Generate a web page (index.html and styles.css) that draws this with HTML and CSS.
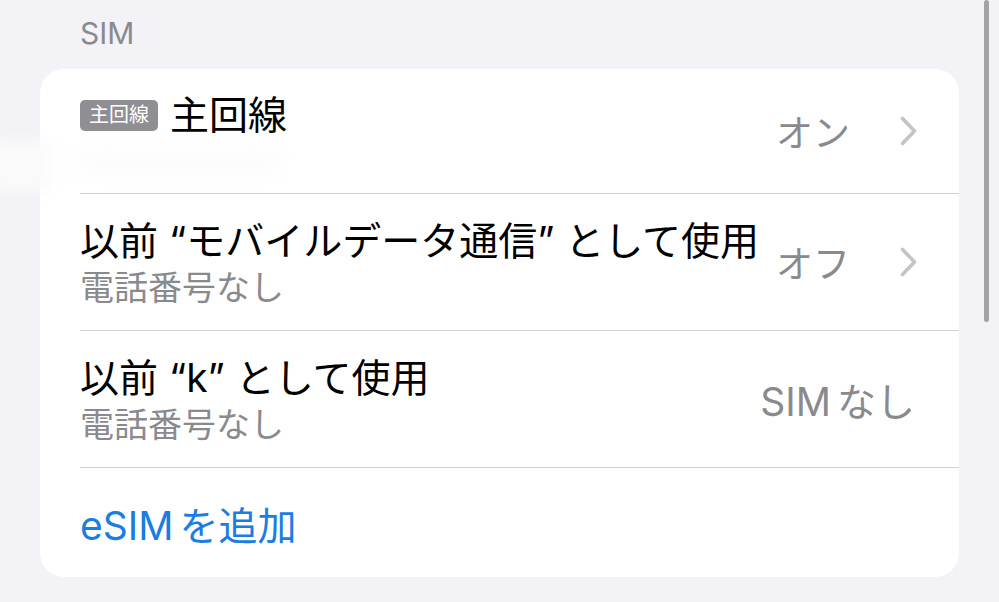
FILE: index.html
```html
<!DOCTYPE html>
<html lang="ja">
<head>
    <meta charset="UTF-8">
    <meta name="viewport" content="width=device-width, initial-scale=1.0">
    <title>SIM</title>
    <link rel="stylesheet" href="styles.css">
</head>
<body>
    <div class="page">
        <div class="section-title">SIM</div>
        <div class="card">
            <!-- 主回線 -->
            <div class="row row-main">
                <div class="row-text">
                    <div class="title"><span class="badge">主回線</span>主回線</div>
                    <div class="number-blur"></div>
                </div>
                <div class="value">オン</div>
                <svg class="chevron" width="17" height="30" viewBox="0 0 17 30"><polyline points="2.5,2.5 14.5,15 2.5,27.5" fill="none" stroke="#c4c4c7" stroke-width="3.6" stroke-linecap="round" stroke-linejoin="round"/></svg>
            </div>
            <div class="row">
                <div class="row-text">
                    <div class="title">以前 “モバイルデータ通信” として使用</div>
                    <div class="subtitle">電話番号なし</div>
                </div>
                <div class="value">オフ</div>
                <svg class="chevron" width="17" height="30" viewBox="0 0 17 30"><polyline points="2.5,2.5 14.5,15 2.5,27.5" fill="none" stroke="#c4c4c7" stroke-width="3.6" stroke-linecap="round" stroke-linejoin="round"/></svg>
            </div>
            <div class="row">
                <div class="row-text">
                    <div class="title">以前 “k” として使用</div>
                    <div class="subtitle">電話番号なし</div>
                </div>
                <div class="value value-plain">SIM<span class="jp-gap">なし</span></div>
            </div>
            <div class="row row-link">
                <div class="link">eSIM<span class="jp-gap">を追加</span></div>
            </div>
        </div>
    </div>
    <div class="left-smear"></div>
    <div class="scrollbar"></div>
</body>
</html>
```

FILE: styles.css
```css
body {
    margin: 0;
    background: #f2f2f7;
    font-family: Inter, "Noto Sans CJK JP", sans-serif;
    color: #000;
    width: 999px;
    height: 602px;
    overflow: hidden;
    position: relative;
}
.page {
    padding: 0 40px;
}
.section-title {
    color: #8a8a8e;
    font-size: 30px;
    line-height: 34px;
    padding: 16px 0 19px 40px;
}
.card {
    background: #fff;
    border-radius: 24px;
    padding-left: 40px;
    overflow: hidden;
}
.row {
    display: flex;
    align-items: center;
    min-height: 136px;
    border-bottom: 1px solid #d1d1d6;
    padding-right: 42px;
}
.row-main {
    min-height: 124px;
}
.row-main .row-text {
    padding-top: 4px;
}
.row-link {
    border-bottom: none;
    min-height: 109px;
}
.row-text {
    flex: 1;
}
.title {
    font-size: 39px;
    line-height: 48px;
    display: flex;
    align-items: center;
}
.subtitle {
    font-size: 34px;
    line-height: 40px;
    margin-top: 3px;
    color: #8a8a8e;
}
.badge {
    background: #8e8e93;
    color: #fff;
    font-size: 20px;
    line-height: 31px;
    padding: 0 9px;
    border-radius: 5px;
    margin-right: 12px;
}
.number-blur {
    width: 200px;
    height: 24px;
    margin-top: 12px;
    background: #fbfbfb;
    filter: blur(10px);
    border-radius: 10px;
}
.value {
    font-size: 37px;
    color: #8a8a8e;
    margin-left: 8px;
}
.value-plain {
    font-size: 39px;
    margin-right: 2px;
}
.jp-gap {
    margin-left: 6px;
}
.chevron {
    display: block;
    margin-left: 50px;
    margin-right: 0;
}
.link {
    font-size: 39px;
    color: #1a7de3;
}
.left-smear {
    position: absolute;
    left: -10px;
    top: 140px;
    width: 60px;
    height: 52px;
    background: #fafafb;
    filter: blur(8px);
}
.scrollbar {
    position: absolute;
    right: 10px;
    top: 0;
    width: 5px;
    height: 322px;
    background: #a3a3a6;
    border-radius: 3px;
}
```
